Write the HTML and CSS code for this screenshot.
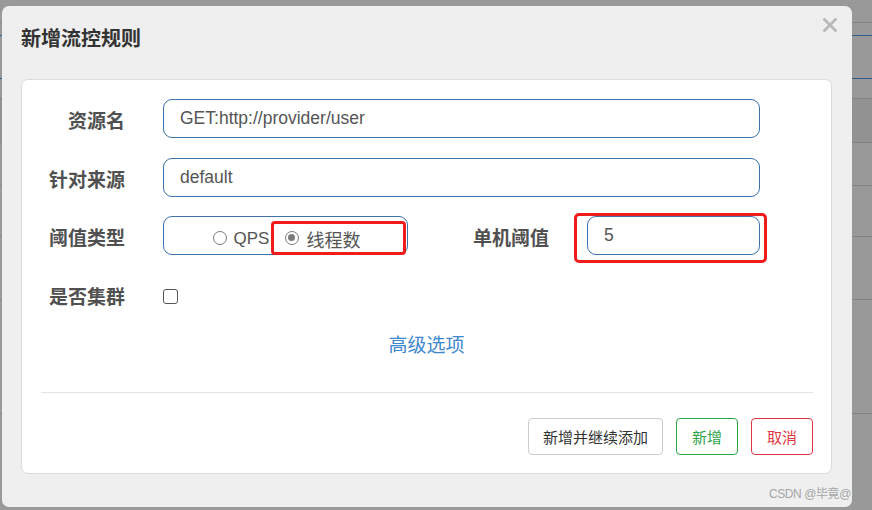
FILE: index.html
```html
<!DOCTYPE html>
<html lang="zh-CN">
<head>
<meta charset="utf-8">
<title>新增流控规则</title>
<link rel="stylesheet" href="styles.css">
</head>
<body>
<div class="backdrop">
  <div class="bg-row h23"></div>
  <div class="bg-row h12 blue"></div>
  <div class="bg-row h42 blue"></div>
  <div class="bg-row h19"></div>
  <div class="bg-row h43 dark"></div>
  <div class="bg-row h42"></div>
  <div class="bg-row h50"></div>
  <div class="bg-row h62"></div>
  <div class="bg-row h113"></div>
</div>

<div class="modal">
  <div class="modal-header">
    <h4 class="modal-title">新增流控规则</h4>
    <button class="close" type="button" aria-label="close">
      <svg width="14" height="14" viewBox="0 0 14 14"><path d="M1.5 1.5 L12.5 12.5 M12.5 1.5 L1.5 12.5" stroke="#b9b9b9" stroke-width="2.8" stroke-linecap="square" fill="none"/></svg>
    </button>
  </div>

  <div class="card">
    <div class="form-row r1">
      <label class="label">资源名</label>
      <div class="input wide">GET:http://provider/user</div>
    </div>
    <div class="form-row r2">
      <label class="label">针对来源</label>
      <div class="input wide">default</div>
    </div>
    <div class="form-row r3">
      <label class="label">阈值类型</label>
      <div class="radio-group">
        <span class="radio"></span><span class="radio-text">QPS</span>
        <span class="radio checked"></span><span class="radio-text cjk">线程数</span>
        <span class="mark mark-a"></span>
      </div>
      <label class="label label2">单机阈值</label>
      <div class="input short">5<span class="mark mark-b"></span></div>
    </div>
    <div class="form-row r4">
      <label class="label">是否集群</label>
      <span class="checkbox"></span>
    </div>
    <div class="advanced">高级选项</div>
    <div class="divider"></div>
    <div class="footer">
      <button class="btn btn-default" type="button">新增并继续添加</button>
      <button class="btn btn-success" type="button">新增</button>
      <button class="btn btn-danger" type="button">取消</button>
    </div>
  </div>
  <div class="watermark">CSDN @毕竟@</div>
</div>
</body>
</html>
```

FILE: styles.css
```css
html, body {
  margin: 0;
  padding: 0;
}
body {
  width: 872px;
  height: 510px;
  overflow: hidden;
  background: #999999;
  position: relative;
  font-family: "Liberation Sans", "Noto Sans CJK SC", sans-serif;
}

/* underlying page, dimmed */
.backdrop {
  display: flex;
  flex-direction: column;
}
.bg-row {
  border-bottom: 1px solid #838383;
  flex: none;
}
.bg-row.blue { border-bottom-color: #2f5d8c; }
.bg-row.dark { background: #929292; }
.h23 { height: 22px; }
.h12 { height: 12px; }
.h42 { height: 42px; }
.h19 { height: 19px; }
.h43 { height: 43px; }
.h50 { height: 50px; }
.h62 { height: 62px; }
.h113 { height: 113px; }

/* modal */
.modal {
  position: absolute;
  left: 2px;
  top: 6px;
  width: 850px;
  height: 501px;
  background: #efefef;
  border-radius: 7px;
  box-sizing: border-box;
  padding: 0 20px 0 19px;
}
.modal-header {
  height: 73px;
  box-sizing: border-box;
  padding-top: 18px;
}
.modal-title {
  margin: 0;
  padding-left: 0;
  font-family: "Noto Sans CJK SC", sans-serif;
  font-size: 20px;
  line-height: 28px;
  font-weight: 700;
  color: #333333;
}
.close {
  position: absolute;
  right: 15px;
  top: 12px;
  width: 14px;
  height: 14px;
  padding: 0;
  border: 0;
  background: none;
  display: block;
}
.close svg { display: block; }

.card {
  background: #ffffff;
  border: 1px solid #dcdcdc;
  border-radius: 7px;
  height: 395px;
  box-sizing: border-box;
  padding-top: 19px;
}

.form-row {
  display: flex;
  align-items: flex-start;
  height: 39px;
}
.r1 { margin-bottom: 20px; }
.r2 { margin-bottom: 19px; }
.r3 { margin-bottom: 20px; }

.label {
  flex: none;
  width: 103px;
  margin-right: 38px;
  height: 39px;
  box-sizing: border-box;
  padding-top: 4px;
  line-height: 34px;
  text-align: right;
  font-family: "Noto Sans CJK SC", sans-serif;
  font-weight: 700;
  font-size: 19px;
  color: #505050;
}
.label2 { width: 141px; }

.input {
  flex: none;
  position: relative;
  height: 39px;
  box-sizing: border-box;
  border: 1px solid #3c72a8;
  border-radius: 9px;
  padding-left: 16px;
  line-height: 37px;
  font-size: 17.5px;
  color: #555555;
}
.wide { width: 597px; }
.short { width: 173px; }

.radio-group {
  flex: none;
  position: relative;
  width: 245px;
  height: 39px;
  box-sizing: border-box;
  border: 1px solid #3c72a8;
  border-radius: 9px;
  display: flex;
  align-items: center;
  justify-content: center;
  padding-top: 6px;
  padding-left: 2px;
}
.radio {
  flex: none;
  width: 14px;
  height: 14px;
  box-sizing: border-box;
  border: 1.5px solid #7a7a7a;
  border-radius: 50%;
  background: #fff;
  margin-right: 7px;
  position: relative;
  top: -1px;
}
.radio.checked::after {
  content: "";
  position: absolute;
  left: 2px;
  top: 2px;
  width: 7px;
  height: 7px;
  border-radius: 50%;
  background: #7a7a7a;
}
.radio-text {
  font-size: 17px;
  color: #555555;
  line-height: 24px;
  margin-right: 16px;
}
.radio-text.cjk {
  font-family: "Noto Sans CJK SC", sans-serif;
  font-size: 18px;
  margin-right: 0;
}

/* red annotation boxes drawn over the form */
.mark {
  position: absolute;
  border: 3px solid #f01c1c;
  border-radius: 4px;
  box-sizing: border-box;
  pointer-events: none;
}
.mark-a {
  left: 107px;
  top: 4px;
  width: 135px;
  height: 34px;
}
.mark-b {
  left: -14px;
  top: -4px;
  width: 193px;
  height: 50px;
  border-radius: 5px;
}

.checkbox {
  flex: none;
  margin-top: 14px;
  width: 15px;
  height: 15px;
  box-sizing: border-box;
  border: 1.5px solid #555555;
  border-radius: 3px;
  background: #fff;
}

.advanced {
  margin-top: 16px;
  height: 28px;
  line-height: 28px;
  text-align: center;
  font-family: "Noto Sans CJK SC", sans-serif;
  font-size: 19px;
  color: #3f87cf;
}

.divider {
  margin: 34px 18px 0 19px;
  height: 1px;
  background: #e3e3e3;
}

.footer {
  display: flex;
  justify-content: flex-end;
  padding: 25px 18px 0 0;
}
.btn {
  height: 37px;
  box-sizing: border-box;
  padding: 0 14px;
  margin-left: 13px;
  border: 1px solid #cccccc;
  border-radius: 4px;
  background: #fff;
  font-family: "Noto Sans CJK SC", sans-serif;
  font-size: 15px;
  line-height: 35px;
  color: #333333;
}
.btn-success {
  border-color: #28a745;
  color: #2ea44a;
  padding: 0 15px;
}
.btn-danger {
  border-color: #dc3545;
  color: #e03543;
  padding: 0 15px;
}

.watermark {
  position: absolute;
  right: 1px;
  top: 480px;
  font-family: "Liberation Sans", "Noto Sans CJK SC", sans-serif;
  font-size: 12px;
  letter-spacing: -0.4px;
  color: #a6a6a6;
  line-height: 16px;
}
```
